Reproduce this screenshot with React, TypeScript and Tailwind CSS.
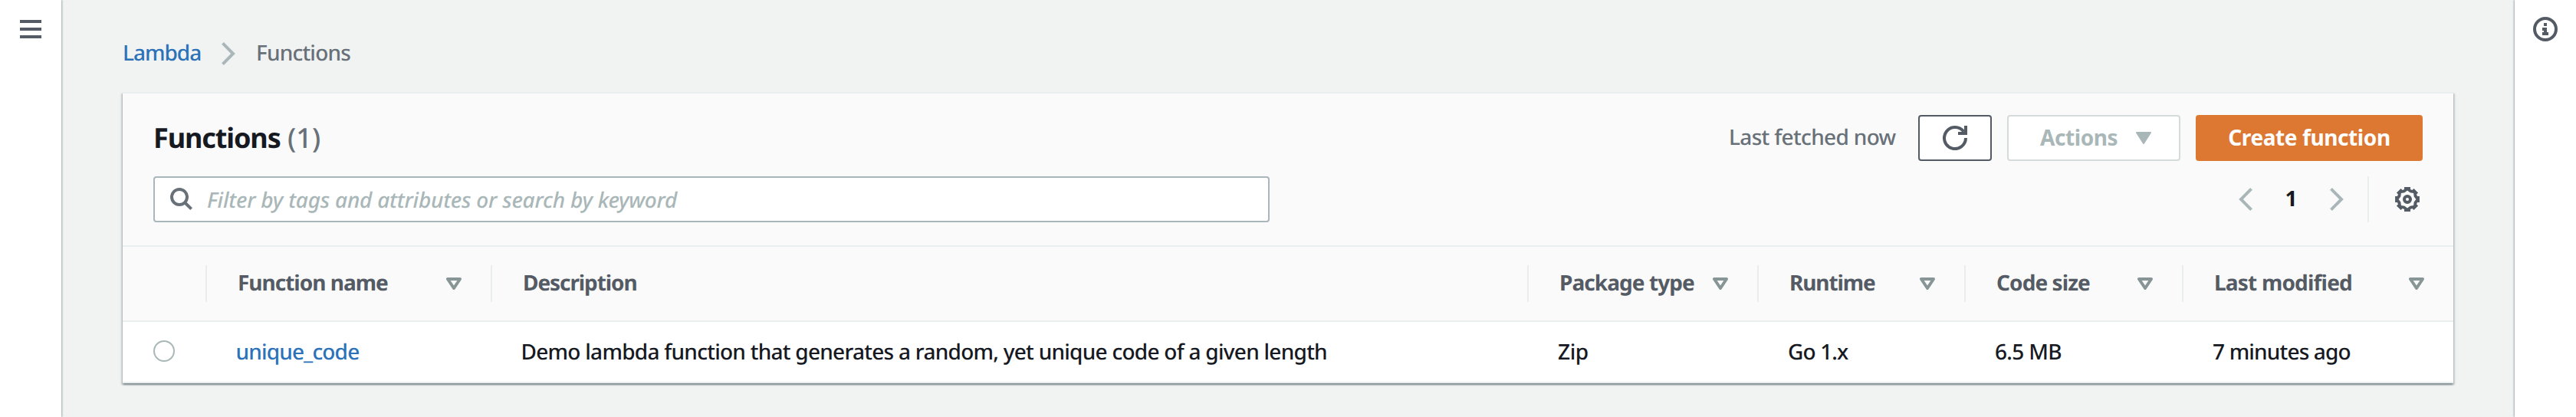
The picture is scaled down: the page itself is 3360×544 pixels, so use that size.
import type { ReactNode } from "react";

const polar = (radius: number, degrees: number) => {
  const a = (degrees * Math.PI) / 180;
  return `${(16 + radius * Math.sin(a)).toFixed(2)} ${(16 - radius * Math.cos(a)).toFixed(2)}`;
};

const teeth = Array.from({ length: 8 }, (_, i) => i * 45);
const gearOutline = teeth
  .flatMap((a) => [polar(13.6, a - 17), polar(16.4, a - 14), polar(16.4, a + 14), polar(13.6, a + 17)])
  .join("L");
const gearInside = teeth.flatMap((a) => [polar(11.4, a), polar(9.4, a + 22.5)]).join("L");

function GearIcon() {
  return (
    <svg className="size-8 fill-[#545b64]" viewBox="0 0 32 32">
      <path fillRule="evenodd" d={`M${gearOutline}ZM${gearInside}Z`} />
      <circle cx="16" cy="16" r="4" className="fill-none stroke-[#545b64]" strokeWidth="4" />
    </svg>
  );
}

function MenuIcon() {
  return (
    <svg className="h-6 w-7 fill-[#545b64]" viewBox="0 0 28 24">
      <path d="M0 0h28v4H0zM0 10h28v4H0zM0 20h28v4H0z" />
    </svg>
  );
}

function InfoIcon() {
  return (
    <svg className="size-8 fill-[#545b64]" viewBox="0 0 32 32">
      <circle cx="16" cy="16" r="14" className="fill-none stroke-[#545b64]" strokeWidth="4" />
      <path d="M14 8h4v4h-4zM12 14h6v6h2v4h-8v-4h2v-2h-2z" />
    </svg>
  );
}

function SearchIcon() {
  return (
    <svg className="size-[30px] fill-none stroke-[#687078]" viewBox="0 0 30 30" strokeWidth="4">
      <circle cx="12" cy="12" r="10" />
      <path d="M18.8 19l8.8 8.6" />
    </svg>
  );
}

function RefreshIcon() {
  return (
    <svg className="size-8 fill-none stroke-[#545b64]" viewBox="0 0 32 32" strokeWidth="4">
      <path d="M30 16a14 14 0 1 1-2.6-8.1" />
      <path d="M20 10h10V0" />
    </svg>
  );
}

function ChevronRight() {
  return (
    <svg className="h-[30px] w-[18px] shrink-0 fill-none stroke-[#aab7b8]" viewBox="0 0 18 30" strokeWidth="4">
      <path d="M1.5 1.4L15 15L1.5 28.6" />
    </svg>
  );
}

function ChevronLeft() {
  return (
    <svg className="h-[30px] w-[18px] shrink-0 fill-none stroke-[#aab7b8]" viewBox="0 0 18 30" strokeWidth="4">
      <path d="M16.5 1.4L3 15L16.5 28.6" />
    </svg>
  );
}

function SortIcon() {
  return (
    <svg className="h-4 w-5 fill-none stroke-[#879596]" viewBox="0 0 20 16" strokeWidth="4" strokeLinejoin="round">
      <path d="M2 2H18L10 14Z" />
    </svg>
  );
}

function CaretIcon() {
  return (
    <svg className="h-4 w-5 fill-[#aab7b8] stroke-[#aab7b8]" viewBox="0 0 20 16" strokeWidth="2" strokeLinejoin="round">
      <path d="M1 1H19L10 15Z" />
    </svg>
  );
}

function HeaderCell({ width, label, sortable, last }: { width: string; label?: ReactNode; sortable?: boolean; last?: boolean }) {
  return (
    <div className={`flex h-12 items-center justify-between pr-[38px] pl-10 ${last ? "" : "border-r-2 border-[#eaeded]"} ${width}`}>
      <span className="pb-0.5 font-bold text-[#545b64]">{label}</span>
      {sortable && <SortIcon />}
    </div>
  );
}

export default function App() {
  return (
    <div className="flex h-[544px] w-[3360px] overflow-hidden bg-[#f1f3f3] font-['Noto_Sans',sans-serif] text-[28px] leading-10 font-medium whitespace-nowrap text-[#16191f] [text-rendering:geometricPrecision]">
      <nav className="w-20 shrink-0 bg-white pt-[26px] pl-[26px] shadow-[1px_0_2px_rgba(0,28,36,0.35)]">
        <MenuIcon />
      </nav>

      <main className="w-[3200px] shrink-0 px-20 pt-[49px]">
        <div className="flex h-10 items-center">
          <a className="w-[129px] tracking-[-1px] text-[#2b72b8]">Lambda</a>
          <span className="pt-0.5"><ChevronRight /></span>
          <span className="ml-[27px] tracking-[-0.8px] text-[#687078]">Functions</span>
        </div>

        <section className="mt-[31px] border-t-2 border-[#eaeded] bg-white shadow-[0_2px_2px_rgba(0,28,36,0.3),2px_2px_2px_rgba(0,28,36,0.15),-2px_2px_2px_rgba(0,28,36,0.15)]">
          <header className="border-b-2 border-[#eaeded] bg-[#fafafa] px-10 pt-7 pb-[30px]">
            <div className="flex h-[60px] items-center">
              <h1 className="flex-1 text-[36px] leading-[48px] font-bold tracking-[-1.1px]">
                Functions <span className="ml-px font-medium tracking-[0.1px] text-[#687078]">(1)</span>
              </h1>
              <span className="w-[247px] pb-0.5 tracking-[-0.66px] text-[#687078]">Last fetched now</span>
              <button className="flex h-[60px] w-24 items-center justify-center rounded-[4px] border-2 border-[#545b64] bg-white">
                <RefreshIcon />
              </button>
              <button className="ml-5 flex h-[60px] w-[226px] items-center justify-between rounded-[4px] border-2 border-[#d5dbdb] bg-white pr-9 pl-[41px] font-bold tracking-[-0.42px] text-[#aab7b8]">
                <span className="pb-0.5">Actions</span>
                <CaretIcon />
              </button>
              <button className="ml-5 h-[60px] w-[296px] rounded-[4px] bg-[#dd7832] pb-0.5 font-bold tracking-[-0.4px] text-white">
                Create function
              </button>
            </div>

            <div className="mt-5 flex h-[60px] items-center justify-between">
              <div className="flex h-[60px] w-[1456px] items-center rounded-[4px] border-2 border-[#aab7b8] bg-white pl-5">
                <SearchIcon />
                <span className="pt-0.5 pl-[18px] tracking-[-0.24px] text-[#aab7b8] italic">
                  Filter by tags and attributes or search by keyword
                </span>
              </div>
              <div className="flex items-center">
                <ChevronLeft />
                <span className="w-[101px] pb-0.5 text-center font-bold">1</span>
                <ChevronRight />
                <div className="ml-[31px] flex h-[60px] items-center border-l-2 border-[#eaeded] pr-1 pl-[34px]">
                  <GearIcon />
                </div>
              </div>
            </div>
          </header>

          <div className="flex h-[98px] items-center border-b-2 border-[#eaeded] bg-[#fafafa]">
            <HeaderCell width="w-[110px]" />
            <HeaderCell width="w-[372px] tracking-[-1px]" label="Function name" sortable />
            <HeaderCell width="w-[1352px] tracking-[-1.08px]" label="Description" />
            <HeaderCell width="w-[300px] tracking-[-0.93px]" label="Package type" sortable />
            <HeaderCell width="w-[270px] tracking-[-1.1px]" label="Runtime" sortable />
            <HeaderCell width="w-[284px] tracking-[-0.92px]" label="Code size" sortable />
            <HeaderCell width="w-[352px] tracking-[-0.8px]" label="Last modified" sortable last />
          </div>

          <div className="flex h-20 items-center border-b-2 border-[#eaeded] bg-white">
            <div className="w-[110px] pb-0.5 pl-10">
              <div className="size-7 rounded-full border-2 border-[#aab7b8] bg-white" />
            </div>
            <a className="w-[372px] pl-[37.5px] tracking-[-0.84px] text-[#2b72b8]">unique_code</a>
            <span className="w-[1352px] pl-[37.5px] tracking-[-0.735px]">
              Demo lambda function that generates a random, yet unique code of a given length
            </span>
            <span className="w-[300px] pl-[38px] tracking-[-0.4px]">Zip</span>
            <span className="w-[270px] pl-[38px] tracking-[-0.86px]">Go 1.x</span>
            <span className="w-[284px] pl-[38px] tracking-[-0.7px]">6.5 MB</span>
            <span className="w-[352px] pl-[38px] tracking-[-0.83px]">7 minutes ago</span>
          </div>
        </section>
      </main>

      <aside className="w-20 shrink-0 bg-white pt-[22px] pl-6 shadow-[-1px_0_2px_rgba(0,28,36,0.35)]">
        <InfoIcon />
      </aside>
    </div>
  );
}
